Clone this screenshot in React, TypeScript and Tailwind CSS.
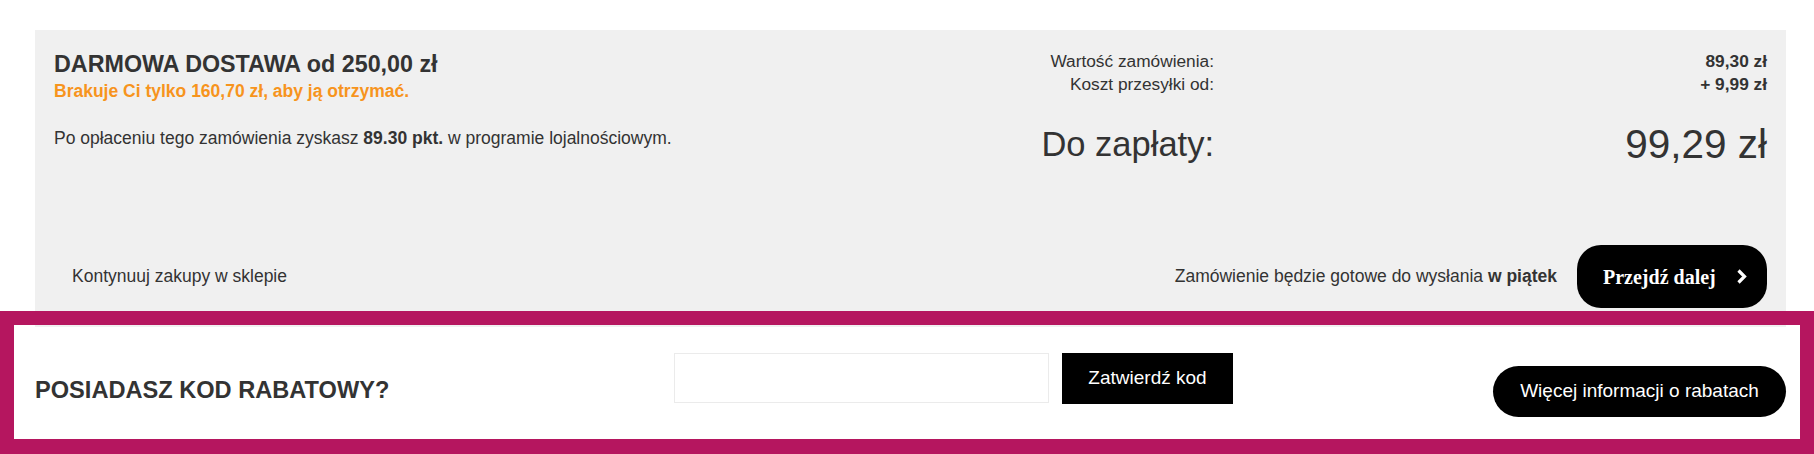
export default function App() {
  return (
    <div className="w-[1814px] h-[454px] overflow-hidden bg-white pt-[30px] font-['Liberation_Sans',Arial,sans-serif] text-[#333]">
      {/* summary panel */}
      <div className="ml-[35px] mr-[28px] h-[297px] bg-[#f0f0f0] flex flex-col pl-[19px] pr-[19px] pt-[20px] pb-[19px]">
        <div className="flex justify-between">
          <div>
            <h2 className="text-[23.3px] leading-[28px] font-bold">
              DARMOWA DOSTAWA od 250,00 zł
            </h2>
            <p className="mt-[2px] text-[17.5px] leading-[22px] font-bold text-[#f7941d]">
              Brakuje Ci tylko 160,70 zł, aby ją otrzymać.
            </p>
            <p className="mt-[25px] text-[17.5px] leading-[22px]">
              Po opłaceniu tego zamówienia zyskasz <b>89.30 pkt.</b> w programie lojalnościowym.
            </p>
          </div>

          <div className="w-[728px]">
            <div className="grid grid-cols-[175px_1fr] text-[17.3px] leading-[23px]">
              <span className="text-right">Wartość zamówienia:</span>
              <span className="text-right font-bold">89,30 zł</span>
              <span className="text-right">Koszt przesyłki od:</span>
              <span className="text-right font-bold">+ 9,99 zł</span>
            </div>
            <div className="mt-[26px] grid grid-cols-[175px_1fr] items-center h-[44px] leading-[44px]">
              <span className="text-right text-[34.5px]">Do zapłaty:</span>
              <span className="text-right text-[40.5px]">99,29 zł</span>
            </div>
          </div>
        </div>

        <div className="mt-auto flex items-center">
          <a className="pl-[18px] text-[17.5px] cursor-pointer">Kontynuuj zakupy w sklepie</a>
          <span className="ml-auto text-[17.5px]">
            Zamówienie będzie gotowe do wysłania <b>w piątek</b>
          </span>
          <button className="ml-[20px] h-[63px] w-[190px] rounded-[24px] bg-black text-white flex items-center pl-[26px] font-['Liberation_Serif','Times_New_Roman',serif] text-[20px] font-bold">
            Przejdź dalej
            <svg className="ml-[20px]" width="11" height="15" viewBox="0 0 11 15" fill="none">
              <polyline points="2.5,1.5 8.5,7.5 2.5,13.5" stroke="white" strokeWidth="3.2" strokeLinejoin="miter" />
            </svg>
          </button>
        </div>
      </div>

      {/* discount code box */}
      <div className="relative -mt-[16px] h-[143px] border-[14px] border-b-[15px] border-[#b5165f] flex items-start pl-[21px] pr-[14px]">
        <h3 className="mt-[51px] w-[639px] text-[23.6px] leading-[28px] font-bold">
          POSIADASZ KOD RABATOWY?
        </h3>
        <div className="mt-[28px] flex gap-[13px]">
          <input type="text" className="w-[375px] h-[50px] border border-[#ebebeb] bg-white outline-none px-3" />
          <button className="w-[171px] h-[51px] bg-black text-white text-[19px]">Zatwierdź kod</button>
        </div>
        <button className="ml-auto mt-[41px] w-[293px] h-[51px] rounded-full bg-black text-white text-[19px]">
          Więcej informacji o rabatach
        </button>
      </div>
    </div>
  );
}
